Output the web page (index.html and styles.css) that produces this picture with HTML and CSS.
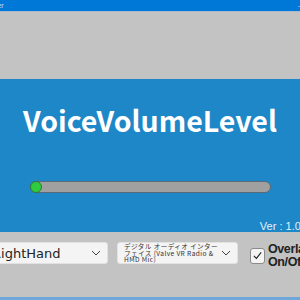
FILE: index.html
```html
<!DOCTYPE html>
<html lang="ja">
<head>
    <meta charset="UTF-8">
    <title>VoiceVolumeLevel</title>
    <link rel="stylesheet" href="styles.css">
</head>
<body>
    <div class="window">
        <div class="titlebar">
            <span class="title">Overlay Setter</span>
            <span class="min">&#8212;</span>
        </div>
        <div class="top"></div>
        <div class="panel">
            <h1 class="app-name">VoiceVolumeLevel</h1>
            <div class="meter">
                <div class="knob"></div>
            </div>
            <div class="version">Ver : 1.0.1</div>
        </div>
        <div class="controls">
            <div class="select select-hand">
                <span class="select-text">RightHand</span>
                <svg class="chevron" viewBox="0 0 10 6" width="10" height="6"><path d="M1 1 L5 5 L9 1" fill="none" stroke="#444" stroke-width="1"/></svg>
            </div>
            <div class="select select-mic">
                <span class="select-text small">デジタル オーディオ インターフェイス (Valve VR Radio &amp; HMD Mic)</span>
                <svg class="chevron" viewBox="0 0 10 6" width="10" height="6"><path d="M1 1 L5 5 L9 1" fill="none" stroke="#444" stroke-width="1"/></svg>
            </div>
            <label class="check">
                <span class="box">
                    <svg viewBox="0 0 12 12" width="11" height="11"><path d="M2 6.5 L4.8 9.2 L10 2.5" fill="none" stroke="#222" stroke-width="1.2"/></svg>
                </span>
                <span class="check-label">Overlay<br>On/Off</span>
            </label>
        </div>
        <div class="bottom-line"></div>
    </div>
</body>
</html>
```

FILE: styles.css
```css
body {
    margin: 0;
    font-family: "Noto Sans CJK JP", "Noto Sans", sans-serif;
    overflow: hidden;
}

.window {
    width: 300px;
    height: 300px;
    display: flex;
    flex-direction: column;
    background: #c3c3c3;
    overflow: hidden;
}

.titlebar {
    height: 11px;
    background: #0078d7;
    border-bottom: 1px solid #a9b9c8;
    display: flex;
    justify-content: space-between;
    align-items: center;
    color: #d8e8f8;
    font-size: 6px;
    line-height: 11px;
    overflow: hidden;
}

.title {
    margin-left: -36px;
}

.min {
    margin-right: -4px;
    font-size: 7px;
}

.top {
    height: 67px;
}

.panel {
    height: 153px;
    background: #1e87c8;
    display: flex;
    flex-direction: column;
    align-items: center;
}

.app-name {
    margin: 22px 0 0;
    color: #fff;
    font-size: 28.5px;
    font-weight: 600;
    line-height: 38px;
    white-space: nowrap;
}

.meter {
    margin-top: 42px;
    width: 239px;
    height: 10px;
    background: #a0a0a0;
    border: 1px solid #5a6a78;
    border-radius: 6px;
    display: flex;
    align-items: center;
}

.knob {
    width: 10px;
    height: 10px;
    margin-left: -1px;
    background: #2fcc3f;
    border: 1px solid #2c7a34;
    border-radius: 50%;
}

.version {
    align-self: flex-end;
    margin: 27px -10px 0 0;
    color: #e4f0fa;
    font-family: "Liberation Sans", sans-serif;
    font-size: 11px;
    white-space: nowrap;
}

.controls {
    height: 65px;
    display: flex;
    align-items: flex-start;
    padding-top: 10px;
    box-sizing: border-box;
}

.select {
    flex-shrink: 0;
    height: 22px;
    background: #f4f4f4;
    border: 1px solid #e2e2e2;
    border-radius: 3px;
    display: flex;
    align-items: center;
    justify-content: space-between;
    box-sizing: border-box;
}

.select-hand {
    width: 136px;
    margin-left: -28px;
    padding: 0 6px 0 19px;
}

.select-text {
    font-family: "DejaVu Sans", sans-serif;
    font-size: 13px;
    color: #222;
}

.select-text.small {
    font-family: "Noto Sans CJK JP", sans-serif;
    font-size: 6.6px;
    line-height: 6.8px;
    width: 96px;
    color: #333;
    letter-spacing: 0.4px;
}

.select-mic {
    width: 121px;
    margin-left: 9px;
    padding: 0 6px 0 6px;
}

.check {
    flex-shrink: 0;
    display: flex;
    align-items: center;
    margin-left: 12px;
    margin-top: 1px;
}

.box {
    width: 13px;
    height: 14px;
    background: #f4f4f4;
    border: 1px solid #8a8a8a;
    border-radius: 3px;
    display: flex;
    align-items: center;
    justify-content: center;
}

.check-label {
    margin-left: 3px;
    font-family: "Liberation Sans", sans-serif;
    font-size: 12.5px;
    font-weight: bold;
    letter-spacing: -0.4px;
    line-height: 12.5px;
    color: #222;
    white-space: nowrap;
}

.bottom-line {
    margin-top: auto;
    height: 3px;
    background: #6fa8d8;
}
```
